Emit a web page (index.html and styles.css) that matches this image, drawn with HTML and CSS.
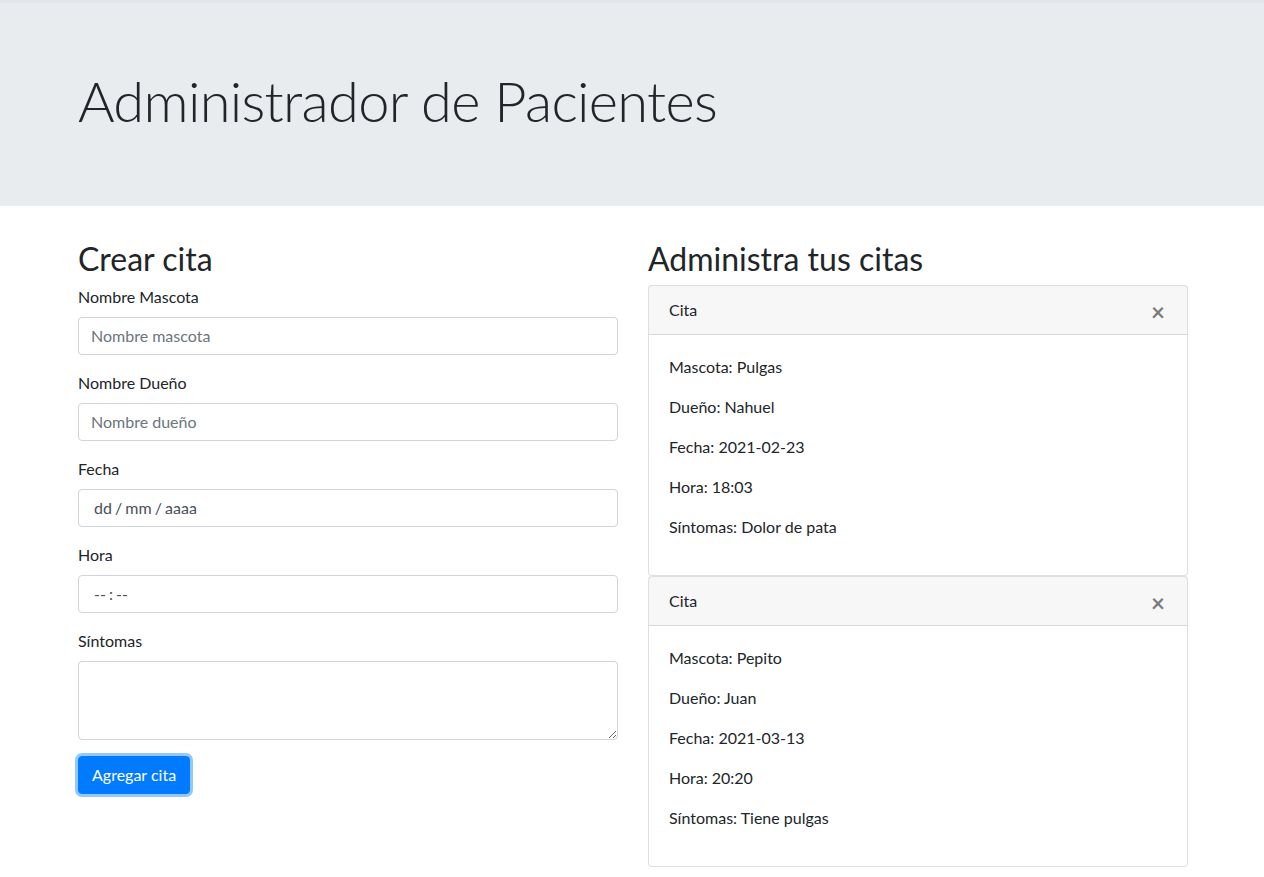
FILE: index.html
```html
<!DOCTYPE html>
<html lang="es">
<head>
<meta charset="utf-8">
<title>Administrador de Pacientes</title>
<link rel="stylesheet" href="styles.css">
</head>
<body>
<header class="jumbotron">
  <div class="container">
    <h1 class="display">Administrador de Pacientes</h1>
  </div>
</header>
<main class="container">
  <div class="row">
    <section class="col">
      <h2 class="section-title">Crear cita</h2>
      <form class="form">
        <div class="form-group">
          <label class="label">Nombre Mascota</label>
          <input class="form-control" type="text" placeholder="Nombre mascota">
        </div>
        <div class="form-group">
          <label class="label">Nombre Dueño</label>
          <input class="form-control" type="text" placeholder="Nombre dueño">
        </div>
        <div class="form-group">
          <label class="label">Fecha</label>
          <div class="form-control fake-input">dd / mm / aaaa</div>
        </div>
        <div class="form-group">
          <label class="label">Hora</label>
          <div class="form-control fake-input">-- : --</div>
        </div>
        <div class="form-group">
          <label class="label">Síntomas</label>
          <textarea class="form-control textarea"></textarea>
        </div>
        <button type="button" class="btn">Agregar cita</button>
      </form>
    </section>
    <section class="col">
      <h2 class="section-title">Administra tus citas</h2>
      <div class="card">
        <div class="card-header"><span>Cita</span><span class="close">×</span></div>
        <div class="card-body">
          <p>Mascota: Pulgas</p>
          <p>Dueño: Nahuel</p>
          <p>Fecha: 2021-02-23</p>
          <p>Hora: 18:03</p>
          <p>Síntomas: Dolor de pata</p>
        </div>
      </div>
      <div class="card">
        <div class="card-header"><span>Cita</span><span class="close">×</span></div>
        <div class="card-body">
          <p>Mascota: Pepito</p>
          <p>Dueño: Juan</p>
          <p>Fecha: 2021-03-13</p>
          <p>Hora: 20:20</p>
          <p>Síntomas: Tiene pulgas</p>
        </div>
      </div>
    </section>
  </div>
</main>
</body>
</html>
```

FILE: styles.css
```css
* { box-sizing: border-box; }
html, body { margin: 0; padding: 0; }
body {
  font-family: "Lato", "Liberation Sans", sans-serif;
  font-size: 16px;
  line-height: 1.5;
  color: #212529;
  background: #fff;
  border-top: 3px solid #e2e5e9;
}
.container {
  width: 1140px;
  margin: 0 0 0 calc(50% - 569px);
  padding: 0 15px;
}
.jumbotron {
  background: #e9ecef;
  padding: 64px 0;
  margin-bottom: 32px;
}
.display {
  font-size: 56px;
  font-weight: 300;
  line-height: 1.2;
  letter-spacing: -0.7px;
  margin: 0 0 8px;
}
.row {
  display: flex;
  margin: 0 -15px;
}
.col {
  flex: 0 0 50%;
  padding: 0 15px;
}
.section-title {
  font-size: 32px;
  font-weight: 400;
  line-height: 1.2;
  margin: 2px 0 6px;
}
.form-group { margin-bottom: 16px; }
.label {
  display: inline-block;
  margin-bottom: 8px;
}
.form-control {
  display: block;
  width: 100%;
  height: 38px;
  padding: 6px 12px;
  font-family: inherit;
  font-size: 16px;
  line-height: 1.5;
  color: #495057;
  background: #fff;
  border: 1px solid #ced4da;
  border-radius: 4px;
}
.form-control::placeholder { color: #6c757d; opacity: 1; }
.fake-input { padding-left: 15px; color: #495057; word-spacing: -1px; }
.textarea { height: 79px; resize: vertical; }
.btn {
  display: inline-block;
  font-family: inherit;
  font-size: 16px;
  line-height: 1.5;
  padding: 6px 13px;
  color: #fff;
  background: #007bff;
  border: 1px solid #007bff;
  border-radius: 4px;
  box-shadow: 0 0 0 3px rgba(38, 143, 255, 0.5);
}
.card {
  border: 1px solid rgba(0, 0, 0, 0.125);
  border-radius: 4px;
  background: #fff;
}
.card-header {
  display: flex;
  justify-content: space-between;
  align-items: flex-start;
  padding: 12px 20px;
  background: rgba(0, 0, 0, 0.03);
  border-bottom: 1px solid rgba(0, 0, 0, 0.125);
}
.close {
  font-size: 24px;
  font-weight: 700;
  line-height: 24px;
  height: 24px;
  color: #000;
  opacity: 0.5;
  text-shadow: 0 1px 0 #fff;
  margin-top: 2px;
  margin-bottom: -2px;
  margin-right: 2px;
}
.card-body { padding: 20px; }
.card-body p { margin: 0 0 16px; }
```
